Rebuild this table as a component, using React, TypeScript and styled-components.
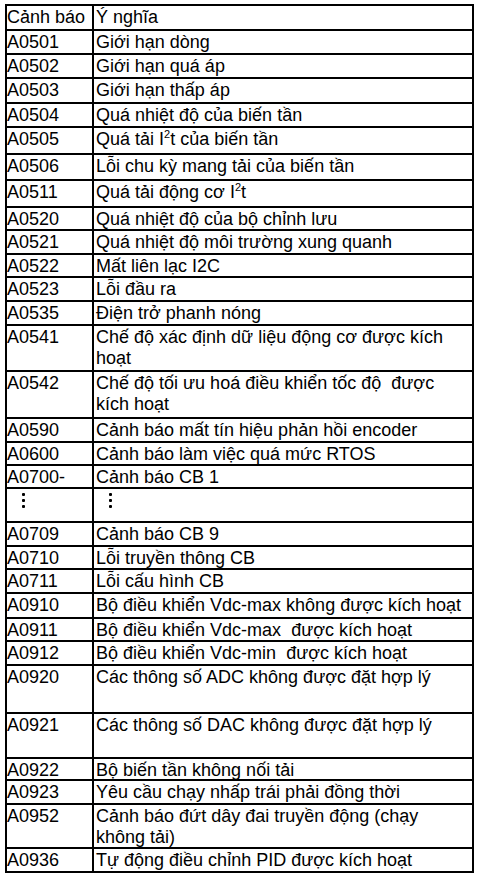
import React from 'react';
import styled, { createGlobalStyle } from 'styled-components';

const GlobalStyle = createGlobalStyle`
  html, body {
    margin: 0;
    padding: 0;
    background: #ffffff;
  }
`;

const Page = styled.div`
  padding: 4px 0 0 5px;
  font-family: "Liberation Sans", Arial, sans-serif;
  font-size: 18px;
  line-height: 21px;
  color: #000000;
`;

const Table = styled.div`
  width: 469px;
  box-sizing: border-box;
  border-left: 2px solid #000;
  border-right: 2px solid #000;
  border-bottom: 2px solid #000;
`;

const Row = styled.div<{ $h: number }>`
  display: grid;
  grid-template-columns: 87px 1fr;
  height: ${p => p.$h}px;
  box-sizing: border-box;
  border-top: 2px solid #000;
`;

const CodeCell = styled.div`
  border-right: 2px solid #000;
  padding: 1px 0 0 0;
  white-space: nowrap;
`;

const TextCell = styled.div`
  padding: 1px 0 0 2px;
`;

// vertical ellipsis drawn as three dots
const VDots = styled.div<{ $indent: number }>`
  display: flex;
  flex-direction: column;
  gap: 3px;
  width: 3px;
  margin: 3px 0 0 ${p => p.$indent}px;

  span {
    width: 3px;
    height: 3px;
    border-radius: 1px;
    background: #000;
  }
`;

const Sup = styled.sup`
  font-size: 11px;
  line-height: 0;
  vertical-align: 7px;
`;

const Ellipsis = ({ indent }: { indent: number }) => (
  <VDots $indent={indent}>
    <span />
    <span />
    <span />
  </VDots>
);

type Item = { code: React.ReactNode; text: React.ReactNode; h: number };

const rows: Item[] = [
  { code: 'Cảnh báo', text: 'Ý nghĩa', h: 25 },
  { code: 'A0501', text: 'Giới hạn dòng', h: 24 },
  { code: 'A0502', text: 'Giới hạn quá áp', h: 24 },
  { code: 'A0503', text: 'Giới hạn thấp áp', h: 25 },
  { code: 'A0504', text: 'Quá nhiệt độ của biến tần', h: 24 },
  { code: 'A0505', text: <>Quá tải I<Sup>2</Sup>t của biến tần</>, h: 27 },
  { code: 'A0506', text: 'Lỗi chu kỳ mang tải của biến tần', h: 26 },
  { code: 'A0511', text: <>Quá tải động cơ I<Sup>2</Sup>t</>, h: 27 },
  { code: 'A0520', text: 'Quá nhiệt độ của bộ chỉnh lưu', h: 23 },
  { code: 'A0521', text: 'Quá nhiệt độ môi trường xung quanh', h: 24 },
  { code: 'A0522', text: 'Mất liên lạc I2C', h: 23 },
  { code: 'A0523', text: 'Lỗi đầu ra', h: 24 },
  { code: 'A0535', text: 'Điện trở phanh nóng', h: 24 },
  { code: 'A0541', text: <>Chế độ xác định dữ liệu động cơ được kích<br />hoạt</>, h: 46 },
  { code: 'A0542', text: <>Chế độ tối ưu hoá điều khiển tốc độ{'\u00a0'} được<br />kích hoạt</>, h: 47 },
  { code: 'A0590', text: 'Cảnh báo mất tín hiệu phản hồi encoder', h: 24 },
  { code: 'A0600', text: 'Cảnh báo làm việc quá mức RTOS', h: 23 },
  { code: 'A0700-', text: 'Cảnh báo CB 1', h: 23 },
  { code: <Ellipsis indent={15} />, text: <Ellipsis indent={13} />, h: 34 },
  { code: 'A0709', text: 'Cảnh báo CB 9', h: 24 },
  { code: 'A0710', text: 'Lỗi truyền thông CB', h: 23 },
  { code: 'A0711', text: 'Lỗi cấu hình CB', h: 24 },
  { code: 'A0910', text: 'Bộ điều khiển Vdc-max không được kích hoạt', h: 25 },
  { code: 'A0911', text: <>Bộ điều khiển Vdc-max{'\u00a0'} được kích hoạt</>, h: 23 },
  { code: 'A0912', text: <>Bộ điều khiển Vdc-min{'\u00a0'} được kích hoạt</>, h: 24 },
  { code: 'A0920', text: 'Các thông số ADC không được đặt hợp lý', h: 48 },
  { code: 'A0921', text: 'Các thông số DAC không được đặt hợp lý', h: 45 },
  { code: 'A0922', text: 'Bộ biến tần không nối tải', h: 22 },
  { code: 'A0923', text: 'Yêu cầu chạy nhấp trái phải đồng thời', h: 24 },
  { code: 'A0952', text: <>Cảnh báo đứt dây đai truyền động (chạy<br />không tải)</>, h: 44 },
  { code: 'A0936', text: 'Tự động điều chỉnh PID được kích hoạt', h: 24 },
];

export default function App() {
  return (
    <>
      <GlobalStyle />
      <Page>
        <Table>
          {rows.map((r, i) => (
            <Row key={i} $h={r.h}>
              <CodeCell>{r.code}</CodeCell>
              <TextCell>{r.text}</TextCell>
            </Row>
          ))}
        </Table>
      </Page>
    </>
  );
}
